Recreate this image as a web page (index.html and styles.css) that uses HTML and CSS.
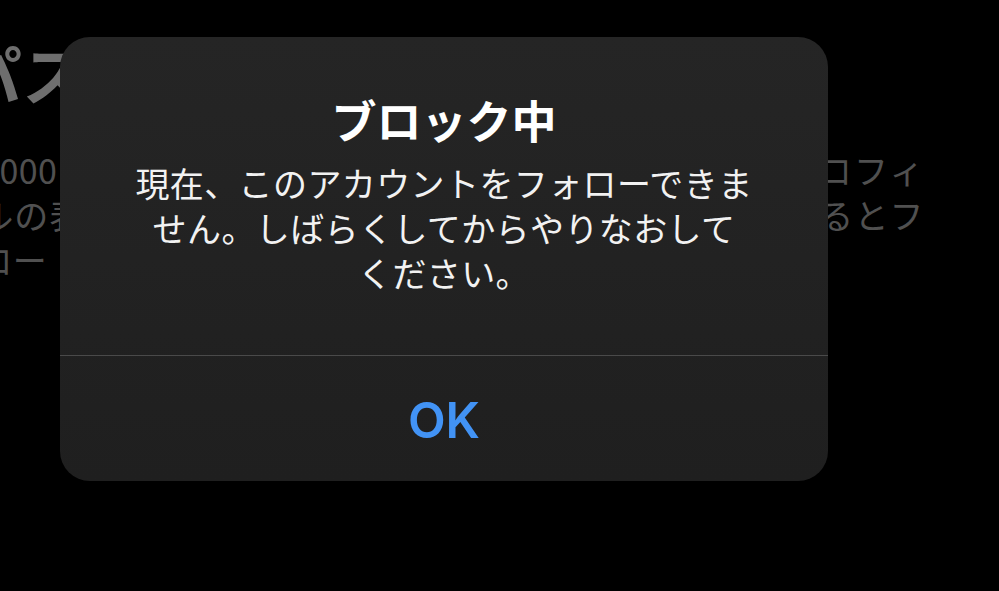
FILE: index.html
```html
<!DOCTYPE html>
<html lang="ja">
<head>
<meta charset="utf-8">
<title>ブロック中</title>
<link rel="stylesheet" href="styles.css">
</head>
<body>
<main class="page">
  <h1 class="page-title">パスワード</h1>
  <div class="page-text">
    <div class="line line-full">は1000件を超えると一部のユーザーにアカウントのプロフィ</div>
    <div class="line line-full">ールの表示が制限されます。しばらく時間をおき確認するとフ</div>
    <div class="line">ォロー</div>
  </div>
</main>
<div class="alert" role="alertdialog">
  <div class="alert-content">
    <h2 class="alert-title">ブロック中</h2>
    <p class="alert-message">現在、このアカウントをフォローできま<br>せん。しばらくしてからやりなおして<br>ください。</p>
  </div>
  <button class="alert-button">OK</button>
</div>
</body>
</html>
```

FILE: styles.css
```css
html, body {
  margin: 0;
  padding: 0;
  background: #000;
  width: 999px;
  height: 591px;
  overflow: hidden;
}

body {
  font-family: "Noto Sans CJK JP", "Noto Sans", sans-serif;
  position: relative;
}

.page {
  padding-top: 32px;
  margin-left: -42px;
}

.page-title {
  margin: 0;
  font-size: 64px;
  line-height: 80px;
  font-weight: 700;
  color: #6e6e6e;
  white-space: nowrap;
}

.page-text {
  margin-top: 35px;
  margin-left: -14px;
  width: 980px;
  font-size: 34px;
  line-height: 45px;
  letter-spacing: 0.4px;
  color: #505050;
}

.line {
  white-space: nowrap;
}

.line-full {
  white-space: normal;
  text-align: justify;
  text-align-last: justify;
}

.alert {
  position: absolute;
  left: 60px;
  top: 37px;
  width: 768px;
  height: 444px;
  border-radius: 30px;
  background: linear-gradient(#252525, #1f1f1f);
  display: flex;
  flex-direction: column;
  overflow: hidden;
}

.alert-content {
  padding: 55px 30px 0;
  height: 319px;
  border-bottom: 1.5px solid #4a4a4a;
  text-align: center;
  box-sizing: border-box;
}

.alert-title {
  margin: 0;
  font-size: 45px;
  line-height: 56px;
  font-weight: 700;
  color: #ffffff;
}

.alert-message {
  margin: 12px 0 0;
  font-size: 34px;
  line-height: 45px;
  letter-spacing: 0.4px;
  font-weight: 400;
  color: #f2f2f2;
}

.alert-button {
  flex: 1;
  border: 0;
  background: transparent;
  font-family: "Inter", "Roboto", sans-serif;
  font-size: 49px;
  font-weight: 600;
  color: #4293f5;
  padding: 0;
  padding-top: 4px;
}
```
